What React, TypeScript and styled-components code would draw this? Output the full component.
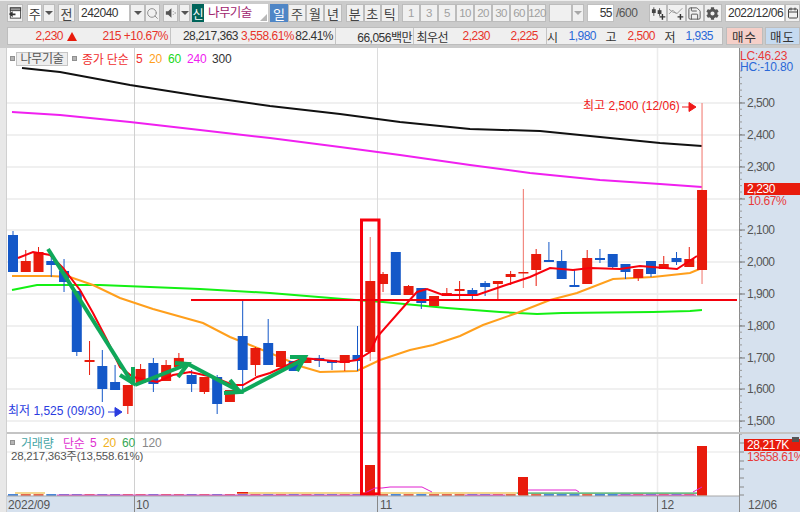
import styled, { createGlobalStyle } from "styled-components";
import { Search, Save, Calendar } from "lucide-react";
import { FaCog } from "react-icons/fa";

const GlobalStyle = createGlobalStyle`
  html, body {
    margin: 0;
    padding: 0;
    background: #fff;
  }
  * {
    box-sizing: border-box;
  }
`;

const FONT = `"Liberation Sans", "Noto Sans CJK KR", sans-serif`;

const Screen = styled.div`
  width: 800px;
  height: 512px;
  overflow: hidden;
  display: flex;
  flex-direction: column;
  background: #cbcbcb;
  font-family: ${FONT};
  font-size: 12px;
  color: #333;
`;

const Toolbar = styled.div`
  height: 27px;
  flex: none;
  display: flex;
  align-items: flex-start;
  padding: 3px 0 0 7px;
  border-top: 1px solid #eee;
`;

const Group = styled.div<{ $gap?: number; $after?: number }>`
  display: flex;
  flex: none;
  gap: ${(p) => p.$gap ?? 0}px;
  margin-right: ${(p) => p.$after ?? 0}px;
`;

const Btn = styled.div<{ $w: number; $active?: boolean; $dim?: boolean }>`
  width: ${(p) => p.$w}px;
  height: 18px;
  flex: none;
  display: flex;
  align-items: center;
  justify-content: center;
  background: ${(p) => (p.$active ? "#4f86c6" : "#f0f0f0")};
  color: ${(p) => (p.$active ? "#fff" : p.$dim ? "#a0a0a0" : "#444")};
  border: 1px solid ${(p) => (p.$active ? "#4f86c6" : "#bcbcbc")};
  font-size: ${(p) => (p.$dim ? 11.5 : 13)}px;
  letter-spacing: ${(p) => (p.$dim ? -0.6 : 0)}px;
`;

const Field = styled.div<{ $w: number; $right?: boolean; $center?: boolean }>`
  width: ${(p) => p.$w}px;
  height: 18px;
  flex: none;
  display: flex;
  align-items: center;
  justify-content: ${(p) => (p.$center ? "center" : p.$right ? "flex-end" : "flex-start")};
  padding: ${(p) => (p.$center ? 0 : "0 1px 0 2px")};
  background: #fff;
  border: 1px solid #c0c0c0;
  color: #333;
  font-size: ${(p) => (p.$center ? 13 : 12)}px;
  letter-spacing: -0.5px;
`;

const Arrow = styled.span<{ $dim?: boolean }>`
  width: 0;
  height: 0;
  border-left: 4px solid transparent;
  border-right: 4px solid transparent;
  border-top: 4px solid ${(p) => (p.$dim ? "#a8a8a8" : "#555")};
`;

const Badge = styled.div`
  width: 12px;
  height: 18px;
  flex: none;
  display: flex;
  align-items: center;
  justify-content: center;
  background: #00645a;
  color: #fff;
  font-size: 12px;
`;

const NameField = styled.div`
  position: relative;
  width: 64px;
  height: 18px;
  flex: none;
  padding-left: 4px;
  background: #fff;
  color: #a0256e;
  font-size: 12.5px;
  line-height: 18px;
  letter-spacing: -0.6px;

  &::after {
    content: "";
    position: absolute;
    right: 1px;
    bottom: 1px;
    border-left: 7px solid transparent;
    border-bottom: 7px solid #b8b8b8;
  }
`;

const Plain = styled.span`
  flex: none;
  width: 26px;
  margin: 0 7px 0 2px;
  line-height: 18px;
  color: #555;
  font-size: 12px;
  letter-spacing: -0.5px;
`;

const QuoteRow = styled.div`
  height: 18px;
  flex: none;
  display: flex;
  margin-left: 7px;
`;

const QuoteBox = styled.div`
  width: 716px;
  flex: none;
  display: flex;
  background: #efefef;
  border: 1px solid #bdbdbd;
`;

const Segment = styled.div<{ $w: number }>`
  width: ${(p) => p.$w}px;
  flex: none;
  display: flex;
  align-items: center;
  border-right: 1px solid #c4c4c4;
  &:last-child {
    border-right: 0;
  }
`;

const Val = styled.span<{ $w: number; $c?: string }>`
  width: ${(p) => p.$w}px;
  flex: none;
  text-align: right;
  color: ${(p) => p.$c ?? "#333"};
  font-size: 12px;
  letter-spacing: -0.5px;
  white-space: nowrap;
`;

const UpMark = styled.span`
  flex: none;
  margin-left: 4px;
  border-left: 5px solid transparent;
  border-right: 5px solid transparent;
  border-bottom: 9px solid #e81b0c;
`;

const TradeBtn = styled.div<{ $bg: string; $w: number; $ml: number }>`
  width: ${(p) => p.$w}px;
  margin-left: ${(p) => p.$ml}px;
  flex: none;
  display: flex;
  align-items: center;
  justify-content: center;
  background: ${(p) => p.$bg};
  border: 1px solid #bdbdbd;
  color: #333;
  font-size: 12.5px;
  letter-spacing: 1px;
`;

const ChartWrap = styled.div`
  flex: 1;
  min-height: 0;
  margin-top: 3px;
  display: flex;
  background: #fff;
`;

const LeftStrip = styled.div`
  width: 7px;
  flex: none;
  background: #e8e8e8;
  border-right: 1px solid #d0d0d0;
`;

const Drawing = styled.svg`
  display: block;
  flex: none;
  font-family: ${FONT};
`;

const Legend = styled.div<{ $top: number }>`
  position: absolute;
  top: ${(p) => p.$top}px;
  left: 3px;
  display: flex;
  align-items: center;
  font-size: 12px;
  letter-spacing: -0.2px;
  white-space: nowrap;
`;

const Dot = styled.span`
  width: 5px;
  height: 5px;
  flex: none;
  background: #b4b4b4;
  border: 1px solid #909090;
`;

const NameChip = styled.span`
  width: 52px;
  height: 14px;
  margin: 0 4px 0 1px;
  flex: none;
  background: #eee;
  border: 1px solid #c4c4c4;
  color: #555;
  font-size: 12px;
  line-height: 12px;
  text-align: center;
  letter-spacing: -0.3px;
`;

const Tag = styled.span<{ $c: string; $w: number; $ml?: number }>`
  width: ${(p) => p.$w}px;
  margin-left: ${(p) => p.$ml ?? 0}px;
  flex: none;
  color: ${(p) => p.$c};
`;

const VolumeText = styled.div`
  position: absolute;
  top: 399px;
  left: 4px;
  color: #555;
  font-size: 11.5px;
  letter-spacing: -0.22px;
  white-space: nowrap;
`;

const ChartBody = styled.div`
  position: relative;
  width: 793px;
  height: 464px;
  flex: none;
  display: flex;
`;

type Candle = [number, number, number, number, number];

// x는 순번으로 계산. [고가y, 몸통위y, 몸통아래y, 저가y, 0=음봉 1=양봉]
const candles: Candle[] = [
  [231, 235, 272, 272, 0], [250, 261, 272, 272, 1], [247, 252, 272, 272, 1],
  [257, 261, 265, 277, 0], [259, 271, 282, 292, 0], [291, 291, 352, 356, 0],
  [341, 360, 362, 375, 1], [350, 366, 389, 402, 0], [365, 382, 390, 390, 0],
  [385, 385, 406, 414, 1], [364, 369, 383, 383, 1], [358, 363, 384, 392, 0],
  [360, 365, 381, 381, 1], [353, 358, 367, 367, 1], [370, 375, 384, 392, 0],
  [377, 377, 392, 394, 1], [375, 377, 404, 414, 0], [390, 390, 402, 402, 1],
  [301, 336, 370, 393, 0], [347, 348, 365, 376, 1], [319, 343, 365, 365, 0],
  [351, 351, 367, 367, 1], [361, 361, 371, 371, 0], [358, 358, 363, 363, 1],
  [355, 358, 361, 367, 0], [360, 360, 363, 370, 0], [355, 355, 363, 371, 1],
  [326, 355, 361, 371, 0], [237, 281, 352, 361, 1], [272, 274, 284, 292, 1],
  [252, 252, 295, 295, 0], [285, 286, 295, 295, 1], [288, 288, 303, 309, 0],
  [296, 296, 306, 306, 1], [288, 293, 296, 296, 1], [281, 289, 291, 300, 1],
  [288, 290, 295, 300, 0], [281, 283, 287, 296, 0], [281, 281, 284, 300, 1],
  [271, 274, 277, 285, 1], [189, 272, 273, 288, 1], [249, 254, 270, 286, 1],
  [242, 260, 262, 262, 0], [250, 261, 279, 279, 0], [269, 285, 287, 287, 0],
  [250, 258, 284, 284, 1], [249, 258, 260, 263, 0], [254, 254, 267, 269, 0],
  [264, 264, 272, 279, 0], [269, 269, 278, 281, 1], [261, 261, 274, 277, 0],
  [256, 264, 269, 269, 1], [252, 258, 262, 265, 0], [247, 259, 267, 267, 1],
  [103, 190, 270, 284, 1],
];

const line = (pts: number[][]) => pts.map((p) => p.join(",")).join(" ");

const ma300 = [[22, 68], [60, 72], [130, 85], [200, 96], [270, 106], [340, 114], [400, 122], [470, 129], [540, 131], [610, 138], [660, 143], [702, 146]];
const ma240 = [[12, 112], [60, 115], [130, 122], [200, 130], [270, 138], [340, 147], [400, 155], [470, 165], [530, 173], [600, 180], [660, 184], [702, 187]];
const ma60 = [[12, 290], [37, 285], [100, 285], [200, 289], [270, 293], [343, 299], [383, 302], [447, 308], [500, 312], [537, 314], [562, 313], [653, 312], [690, 311], [702, 310]];
const ma20 = [[12, 276], [50, 276], [70, 277], [93, 285], [120, 298], [153, 309], [203, 323], [230, 337], [270, 353], [303, 367], [320, 372], [357, 371], [380, 360], [410, 350], [433, 345], [460, 336], [483, 325], [517, 313], [550, 300], [577, 293], [613, 279], [653, 277], [690, 273], [702, 268]];
const ma5 = [[18, 258], [33, 252], [50, 255], [63, 268], [80, 290], [93, 313], [107, 340], [120, 367], [133, 377], [157, 382], [173, 375], [190, 372], [213, 377], [233, 385], [243, 385], [257, 377], [270, 373], [303, 358], [343, 362], [357, 360], [370, 352], [377, 337], [407, 303], [417, 292], [427, 289], [443, 295], [477, 295], [503, 286], [530, 277], [550, 268], [573, 270], [590, 268], [620, 269], [640, 266], [677, 269], [697, 256]];

const gridY = [103, 135, 167, 199, 230, 262, 294, 326, 358, 389, 421];
const prices = ["2,500", "2,400", "2,300", "", "2,100", "2,000", "1,900", "1,800", "1,700", "1,600", "1,500"];
const minorY = Array.from({ length: 58 }, (_, i) => 71 + i * 6.37);

// 화면 좌표 그대로 쓰기 위해 차트 svg는 viewBox로 원점을 맞춘다
function PlotDrawing() {
  return (
    <Drawing width={732} height={464} viewBox="7 48 732 464">
      <rect x={7} y={48} width={732} height={464} fill="#fff" />
      {gridY.map((y) => (
        <line key={y} x1={7} x2={739} y1={y} y2={y} stroke="#e2e2e2" strokeWidth={1.2} />
      ))}
      <line x1={7} x2={739} y1={452} y2={452} stroke="#e6e6e6" strokeWidth={1.2} />
      <line x1={134.5} x2={134.5} y1={48} y2={496} stroke="#d0d0d0" />
      <line x1={377.5} x2={377.5} y1={48} y2={496} stroke="#dcdcdc" />
      <line x1={657.5} x2={657.5} y1={48} y2={496} stroke="#ececec" strokeWidth={1.5} />
      <rect x={7} y={432} width={732} height={2} fill="#c4c4c4" />

      <polyline points={line(ma300)} fill="none" stroke="#111" strokeWidth={2} />
      <polyline points={line(ma240)} fill="none" stroke="#f020f0" strokeWidth={2} />
      <polyline points={line(ma60)} fill="none" stroke="#14f014" strokeWidth={2} />
      <polyline points={line(ma20)} fill="none" stroke="#ff9f1c" strokeWidth={2} />

      {candles.map(([hi, top, bot, lo, up], i) => {
        const x = 13 + i * 12.76;
        const c = up ? "#e81b0c" : "#1458c8";
        const thin = bot - top < 4;
        const faint = i === 28 || i === 40 || i === 54;
        return (
          <g key={i}>
            <line x1={x} x2={x} y1={hi} y2={lo} stroke={faint ? "#f28a82" : c} strokeWidth={faint ? 1.2 : 1} />
            <rect x={x - 5} y={top} width={10} height={thin ? Math.max(bot - top, 1.5) : bot - top} fill={c} />
          </g>
        );
      })}

      <polyline points={line(ma5)} fill="none" stroke="#f8000c" strokeWidth={2} />

      <g fill="none" stroke="#0fa85a" strokeWidth={4} strokeLinejoin="miter">
        <polyline points="48,249 133,384" />
        <polyline points="120,375 133,383 133,367" />
        <polyline points="135,385 188,364" />
        <polyline points="175,363 188,364 178,377" />
        <polyline points="188,364 241,392" />
        <polyline points="224,393 240,392 230,380" />
        <polyline points="241,392 306,358" />
        <polyline points="290,357 305,357 297,371" />
      </g>

      <line x1={191} x2={737} y1={300} y2={300} stroke="#f4000c" strokeWidth={2} />

      <text x={583} y={110} fill="#f01818" fontSize={12}>최고 2,500 (12/06)</text>
      <path d="M682 107h10M689 102.500l7 4.500-7 4.500z" stroke="#f01818" fill="#f01818" />
      <text x={8} y={415} fill="#2a3ce0" fontSize={12}>최저 1,525 (09/30)</text>
      <path d="M108 412h10M115 407.500l7 4.500-7 4.500z" stroke="#2a3ce0" fill="#2a3ce0" />

      {/* 거래량 */}
      {candles.map(([, , , , up], i) => (
        <rect key={i} x={8 + i * 12.76} y={494} width={10} height={2} fill={up ? "#e8664c" : "#4a86d8"} />
      ))}
      <rect x={15} y={492.500} width={30} height={1} fill="#e8b020" />
      <rect x={237} y={492.500} width={280} height={1} fill="#e8b020" />
      <rect x={517} y={492.500} width={180} height={1.200} fill="#2ea050" />
      <rect x={57} y={494.500} width={308} height={1.500} fill="#e050c8" />
      <rect x={465} y={494.500} width={40} height={1.500} fill="#e050c8" />
      <rect x={618} y={494.500} width={78} height={1.500} fill="#e050c8" />
      <rect x={365} y={465} width={10} height={30} fill="#e81b0c" />
      <rect x={518} y={477} width={10} height={18} fill="#e81b0c" />
      <rect x={697} y={446} width={10} height={49} fill="#e81b0c" />
      <rect x={237} y={492} width={11} height={1.500} fill="#e81b0c" />
      <polyline points="365,493 375,488 382,488 390,487 422,487 432,492" fill="none" stroke="#e020d0" />
      <polyline points="528,490 576,490 579,492" fill="none" stroke="#e020d0" />
      <polyline points="693,492 702,487" fill="none" stroke="#e020d0" />

      <rect x={361.500} y={220} width={17.500} height={274} fill="none" stroke="#f8000c" strokeWidth={3} />

      <rect x={7} y={496} width={732} height={16} fill="#d6e1ee" />
      <line x1={7} x2={739} y1={496} y2={496} stroke="#a8a8a8" />
      <line x1={134.5} x2={134.5} y1={496} y2={512} stroke="#888" />
      <line x1={377.5} x2={377.5} y1={496} y2={512} stroke="#888" />
      <line x1={657.5} x2={657.5} y1={496} y2={512} stroke="#888" />
      <g fill="#555" fontSize={12} letterSpacing={-0.2}>
        <text x={8} y={509}>2022/09</text>
        <text x={136} y={509}>10</text>
        <text x={380} y={509}>11</text>
        <text x={661} y={509}>12</text>
      </g>
    </Drawing>
  );
}

function AxisDrawing() {
  return (
    <Drawing width={61} height={464} viewBox="739 48 61 464">
      <rect x={739} y={48} width={61} height={464} fill="#d6e1ee" />
      <line x1={739.5} x2={739.5} y1={48} y2={512} stroke="#8c8c8c" />
      {minorY.map((y) => (
        <line key={y} x1={739} x2={742} y1={y} y2={y} stroke="#999" />
      ))}
      {gridY.map((y, i) => (
        <g key={y}>
          <line x1={739} x2={745} y1={y} y2={y} stroke="#777" />
          {prices[i] && (
            <text x={747} y={y + 4} fill="#555" fontSize={12} letterSpacing={-0.5}>{prices[i]}</text>
          )}
        </g>
      ))}
      <rect x={739} y={432} width={61} height={2} fill="#c4c4c4" />
      <text x={740} y={60} fill="#e83a3a" fontSize={12} letterSpacing={-0.2}>LC:46.23</text>
      <text x={740} y={71} fill="#2a68d8" fontSize={12} letterSpacing={-0.2}>HC:-10.80</text>

      <rect x={744} y={183} width={56} height={12} fill="#e81b0c" />
      <text x={747} y={193} fill="#fff" fontSize={12} letterSpacing={-0.4}>2,230</text>
      <text x={748} y={205} fill="#e83a3a" fontSize={12} letterSpacing={-0.4}>10.67%</text>

      {[443, 452, 461, 469, 478, 487, 495].map((y) => (
        <line key={y} x1={739} x2={744} y1={y} y2={y} stroke="#888" />
      ))}
      <rect x={744} y={439} width={56} height={12} fill="#e81b0c" />
      <rect x={792} y={437} width={7} height={5} fill="#555" />
      <text x={747} y={449} fill="#fff" fontSize={12} letterSpacing={-0.4}>28,217K</text>
      <text x={747} y={461} fill="#e83a3a" fontSize={12} letterSpacing={-0.4}>13558.61%</text>
      <text x={748} y={509} fill="#555" fontSize={12} letterSpacing={-0.2}>12/06</text>
    </Drawing>
  );
}

function PanelIcon() {
  return (
    <svg width={15} height={14} viewBox="0 0 15 14">
      <rect x={2.500} y={1.500} width={11} height={11} fill="#fff" stroke="#444" />
      <rect x={2.500} y={1.500} width={11} height={3} fill="#999" stroke="#444" />
      <path d="M1 8l4-3v2.500h3v2h-3v2z" fill="#333" />
    </svg>
  );
}

function SpeakerIcon() {
  return (
    <svg width={14} height={14} viewBox="0 0 14 14">
      <path d="M2 5h2.500l3.500-3v10l-3.500-3h-2.500z" fill="#555" />
      <path d="M10 5v1M10 8v1M12 6v2" stroke="#999" />
    </svg>
  );
}

function CandleAddIcon() {
  return (
    <svg width={17} height={15} viewBox="0 0 17 15">
      <path d="M4 1v9M10 2v8" stroke="#555" />
      <rect x={2} y={3} width={4} height={4} fill="#444" />
      <rect x={8} y={4} width={4} height={4} fill="#444" />
      <path d="M13 8v6M10 11h6" stroke="#333" strokeWidth={1.500} />
    </svg>
  );
}

function LineAddIcon() {
  return (
    <svg width={17} height={15} viewBox="0 0 17 15">
      <path d="M1 8l4-4 4 4 6-6M1 3l4 3 4 1" fill="none" stroke="#999" />
      <path d="M13 8v6M10 11h6" stroke="#333" strokeWidth={1.500} />
    </svg>
  );
}

export default function App() {
  return (
    <Screen>
      <GlobalStyle />
      <Toolbar>
        <Group $after={4}><Btn $w={16}><PanelIcon /></Btn></Group>
        <Group $after={3} $gap={1}>
          <Field $w={15} $center>주</Field>
          <Btn $w={12}><Arrow /></Btn>
        </Group>
        <Group $after={3}><Btn $w={17}>전</Btn></Group>
        <Group $after={3}>
          <Field $w={52}>242040</Field>
          <Btn $w={15}><Arrow /></Btn>
          <Btn $w={15}><Search size={13} color="#888" strokeWidth={1.700} /></Btn>
        </Group>
        <Group $after={2} $gap={1}>
          <Btn $w={15}><SpeakerIcon /></Btn>
          <Btn $w={11}><Arrow /></Btn>
        </Group>
        <Group $after={2}>
          <Badge>신</Badge>
          <NameField>나무기술</NameField>
        </Group>
        <Group $after={4}>
          <Btn $w={18} $active>일</Btn>
          <Btn $w={18}>주</Btn>
          <Btn $w={18}>월</Btn>
          <Btn $w={18}>년</Btn>
        </Group>
        <Group $after={3.5}>
          <Btn $w={17.5}>분</Btn>
          <Btn $w={17.5}>초</Btn>
          <Btn $w={17.5}>틱</Btn>
        </Group>
        <Group $after={3}>
          {["1", "3", "5", "10", "20", "30", "60", "120"].map((t) => (
            <Btn key={t} $w={18} $dim>{t}</Btn>
          ))}
        </Group>
        <Group $after={3}>
          <Btn $w={23} $dim />
          <Btn $w={12} $dim><Arrow $dim /></Btn>
        </Group>
        <Field $w={27} $right>55</Field>
        <Plain>/600</Plain>
        <Group $after={3}>
          <Btn $w={18.25}><CandleAddIcon /></Btn>
          <Btn $w={18.25}><LineAddIcon /></Btn>
          <Btn $w={18.25}><Save size={15} color="#555" strokeWidth={1.500} /></Btn>
          <Btn $w={18.25}><FaCog size={13} color="#555" /></Btn>
        </Group>
        <Field $w={60}>2022/12/06</Field>
        <Btn $w={15}><Calendar size={12} color="#444" /></Btn>
      </Toolbar>

      <QuoteRow>
        <QuoteBox>
          <Segment $w={163}>
            <Val $w={55} $c="#e8342a">2,230</Val>
            <UpMark />
            <Val $w={44} $c="#e8342a">215</Val>
            <Val $w={47} $c="#e8342a">+10.67%</Val>
          </Segment>
          <Segment $w={165}>
            <Val $w={67}>28,217,363</Val>
            <Val $w={56} $c="#e8342a">3,558.61%</Val>
            <Val $w={39}>82.41%</Val>
          </Segment>
          <Segment $w={78}>
            <Val $w={76}>66,056백만</Val>
          </Segment>
          <Segment $w={133}>
            <Val $w={34}>최우선</Val>
            <Val $w={42} $c="#e8342a">2,230</Val>
            <Val $w={48} $c="#e8342a">2,225</Val>
          </Segment>
          <Segment $w={177}>
            <Val $w={10}>시</Val>
            <Val $w={39} $c="#2a68d8">1,980</Val>
            <Val $w={20}>고</Val>
            <Val $w={39} $c="#e8342a">2,500</Val>
            <Val $w={20}>저</Val>
            <Val $w={38} $c="#2a68d8">1,935</Val>
          </Segment>
        </QuoteBox>
        <TradeBtn $bg="#f5cfc8" $w={37} $ml={3}>매수</TradeBtn>
        <TradeBtn $bg="#c5daf0" $w={35} $ml={2}>매도</TradeBtn>
      </QuoteRow>

      <ChartWrap>
        <LeftStrip />
        <ChartBody>
          <PlotDrawing />
          <AxisDrawing />
          <Legend $top={2}>
            <Dot />
            <NameChip>나무기술</NameChip>
            <Dot />
            <Tag $c="#f03030" $w={54} $ml={5}>종가 단순</Tag>
            <Tag $c="#f03030" $w={13}>5</Tag>
            <Tag $c="#ff9f1c" $w={19}>20</Tag>
            <Tag $c="#20d820" $w={19}>60</Tag>
            <Tag $c="#f020f0" $w={25}>240</Tag>
            <Tag $c="#333" $w={20}>300</Tag>
          </Legend>
          <Legend $top={386}>
            <Dot />
            <Tag $c="#45a5a5" $w={42} $ml={6}>거래량</Tag>
            <Tag $c="#e030d0" $w={27}>단순</Tag>
            <Tag $c="#e030d0" $w={13}>5</Tag>
            <Tag $c="#f0b020" $w={19}>20</Tag>
            <Tag $c="#35a855" $w={20}>60</Tag>
            <Tag $c="#888" $w={20}>120</Tag>
          </Legend>
          <VolumeText>28,217,363주(13,558.61%)</VolumeText>
        </ChartBody>
      </ChartWrap>
    </Screen>
  );
}
